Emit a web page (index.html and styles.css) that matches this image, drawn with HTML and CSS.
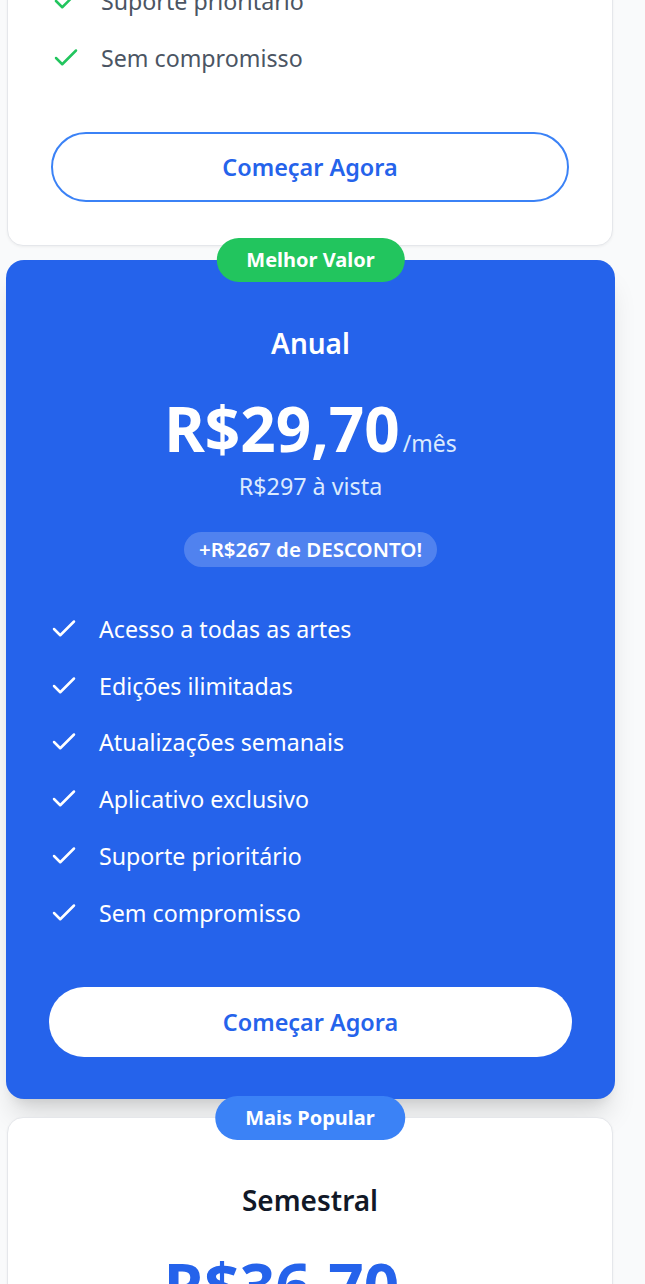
FILE: index.html
```html
<!DOCTYPE html>
<html lang="pt-BR">
<head>
<meta charset="utf-8">
<title>Planos</title>
<link rel="stylesheet" href="styles.css">
</head>
<body>
<main class="plans">
  <article class="card card--monthly">
    <ul class="features features--light">
      <li class="feature"><svg class="check" viewBox="0 0 24 24"><path d="M20 6 9 17l-5-5"/></svg><span>Suporte prioritário</span></li>
      <li class="feature"><svg class="check" viewBox="0 0 24 24"><path d="M20 6 9 17l-5-5"/></svg><span>Sem compromisso</span></li>
    </ul>
    <a class="btn btn--outline" href="#">Começar Agora</a>
  </article>

  <article class="card card--featured">
    <span class="badge badge--green">Melhor Valor</span>
    <h3 class="plan-name">Anual</h3>
    <div class="price">
      <span class="amount">R$29,70</span><span class="per">/mês</span>
    </div>
    <p class="total">R$297 à vista</p>
    <span class="discount">+R$267 de DESCONTO!</span>
    <ul class="features features--dark">
      <li class="feature"><svg class="check" viewBox="0 0 24 24"><path d="M20 6 9 17l-5-5"/></svg><span>Acesso a todas as artes</span></li>
      <li class="feature"><svg class="check" viewBox="0 0 24 24"><path d="M20 6 9 17l-5-5"/></svg><span>Edições ilimitadas</span></li>
      <li class="feature"><svg class="check" viewBox="0 0 24 24"><path d="M20 6 9 17l-5-5"/></svg><span>Atualizações semanais</span></li>
      <li class="feature"><svg class="check" viewBox="0 0 24 24"><path d="M20 6 9 17l-5-5"/></svg><span>Aplicativo exclusivo</span></li>
      <li class="feature"><svg class="check" viewBox="0 0 24 24"><path d="M20 6 9 17l-5-5"/></svg><span>Suporte prioritário</span></li>
      <li class="feature"><svg class="check" viewBox="0 0 24 24"><path d="M20 6 9 17l-5-5"/></svg><span>Sem compromisso</span></li>
    </ul>
    <a class="btn btn--white" href="#">Começar Agora</a>
  </article>

  <article class="card card--semestral">
    <span class="badge badge--blue">Mais Popular</span>
    <h3 class="plan-name">Semestral</h3>
    <div class="price">
      <span class="amount">R$36,70</span><span class="per">/mês</span>
    </div>
  </article>
</main>
</body>
</html>
```

FILE: styles.css
```css
* {
  box-sizing: border-box;
  margin: 0;
  padding: 0;
}

html,
body {
  background: #f9fafb;
}

body {
  width: 645px;
  height: 1284px;
  overflow: hidden;
  font-family: "Noto Sans", "Open Sans", sans-serif;
  color: #111827;
}

.plans {
  display: flex;
  flex-direction: column;
  width: 606px;
  margin-left: 7px;
  margin-top: -17.5px;
}

.card {
  position: relative;
  background: #ffffff;
  border: 1px solid #e5e7eb;
  border-radius: 16px;
  box-shadow: 0 1px 3px rgba(0, 0, 0, 0.05);
  padding: 0 43px 43px;
  display: flex;
  flex-direction: column;
  align-items: center;
}

.card--monthly {
  padding-top: 0;
}

.card--featured {
  margin: 14px -2px 0 -1px;
  background: #2563eb;
  border: none;
  border-radius: 18px;
  padding: 61px 43px 42px;
  color: #ffffff;
  box-shadow: 0 22px 28px -6px rgba(0, 0, 0, 0.13), 0 9px 12px -7px rgba(0, 0, 0, 0.1);
}

.card--semestral {
  margin-top: 18px;
  padding-top: 60px;
  min-height: 400px;
}

.badge {
  position: absolute;
  top: 0;
  left: 50%;
  transform: translate(-50%, -50%);
  height: 44px;
  padding: 0 30px;
  border-radius: 999px;
  display: inline-flex;
  align-items: center;
  font-size: 20px;
  font-weight: 700;
  color: #ffffff;
  white-space: nowrap;
}

.badge--green {
  background: #22c55e;
}

.badge--blue {
  background: #3b82f6;
}

.plan-name {
  font-size: 28px;
  line-height: 45px;
  font-weight: 600;
  text-align: center;
}

.card--semestral .plan-name {
  color: #111827;
}

.price {
  margin-top: 32px;
  display: flex;
  align-items: baseline;
  justify-content: center;
  gap: 3px;
}

.amount {
  font-size: 62px;
  line-height: 60px;
  font-weight: 700;
  letter-spacing: 0;
}

.card--semestral .amount {
  color: #2563eb;
}

.per {
  font-size: 23px;
  color: #dbeafe;
}

.card--semestral .per {
  color: #6b7280;
}

.total {
  margin-top: 10px;
  font-size: 23.3px;
  line-height: 35px;
  color: #dbeafe;
  text-align: center;
}

.discount {
  margin-top: 28px;
  height: 35px;
  padding: 0 15px;
  border-radius: 999px;
  background: rgba(255, 255, 255, 0.2);
  display: inline-flex;
  align-items: center;
  font-size: 20.5px;
  font-weight: 600;
  color: #ffffff;
}

.features {
  list-style: none;
  align-self: stretch;
  display: flex;
  flex-direction: column;
  gap: 21.8px;
}

.card--featured .features {
  margin-top: 44.5px;
}

.feature {
  display: flex;
  align-items: center;
  gap: 20px;
  height: 35px;
  font-size: 23.2px;
}

.check {
  width: 30px;
  height: 30px;
  flex: none;
  fill: none;
  stroke-width: 2;
  stroke-linecap: round;
  stroke-linejoin: round;
}

.features--light .feature {
  color: #4b5563;
}

.features--light .check {
  stroke: #22c55e;
}

.features--dark .feature {
  color: #ffffff;
}

.features--dark .check {
  stroke: #ffffff;
}

.btn {
  margin-top: 56.5px;
  align-self: stretch;
  height: 70px;
  border-radius: 999px;
  display: flex;
  align-items: center;
  justify-content: center;
  font-size: 23.4px;
  font-weight: 600;
  text-decoration: none;
  color: #2563eb;
}

.btn--outline {
  border: 2px solid #3b82f6;
  background: #ffffff;
}

.btn--white {
  background: #ffffff;
}
```
